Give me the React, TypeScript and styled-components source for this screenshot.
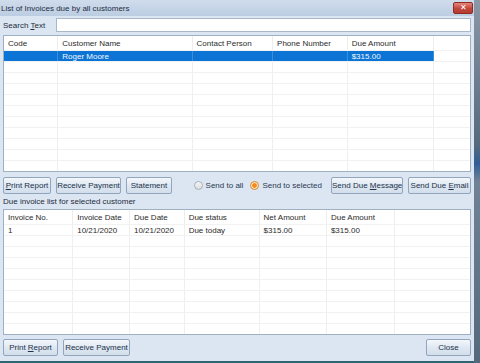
import React from "react";
import styled, { createGlobalStyle } from "styled-components";

const GlobalStyle = createGlobalStyle`
  html, body {
    margin: 0;
    padding: 0;
    background: #5f7286;
  }
  body {
    font-family: "Liberation Sans", Arial, sans-serif;
    font-size: 8px;
    color: #1c2a3a;
  }
`;

type Col = { title: string; width: number };

const customerCols: Col[] = [
  { title: "Code", width: 54 },
  { title: "Customer Name", width: 135 },
  { title: "Contact Person", width: 80 },
  { title: "Phone Number", width: 74 },
  { title: "Due Amount", width: 86 },
  { title: "", width: 37 },
];

const invoiceCols: Col[] = [
  { title: "Invoice No.", width: 69 },
  { title: "Invoice Date", width: 56 },
  { title: "Due Date", width: 54 },
  { title: "Due status", width: 75 },
  { title: "Net Amount", width: 67 },
  { title: "Due Amount", width: 68 },
  { title: "", width: 77 },
];

const customers = [["", "Roger Moore", "", "", "$315.00"]];
const invoices = [["1", "10/21/2020", "10/21/2020", "Due today", "$315.00", "$315.00"]];

const Page = styled.div`
  display: flex;
  width: 480px;
  height: 363px;
`;

const Window = styled.div`
  width: 474px;
  height: 361px;
  background: #dce6f2;
  border-bottom: 2px solid #2f6570;
  display: flex;
  flex-direction: column;
`;

const Backdrop = styled.div`
  flex: 1;
  background: linear-gradient(#8a97a6 0%, #55697d 40%, #2f5d96 45%, #6f8296 50%, #55697d 100%);
`;

const TitleBar = styled.div`
  height: 16px;
  display: flex;
  align-items: center;
  padding-left: 1px;
  background: linear-gradient(#cfdcec, #bccde2);
  color: #1e2c3e;
`;

const CloseButton = styled.div`
  margin-left: auto;
  margin-right: 1px;
  width: 18px;
  height: 10px;
  border: 1px solid #8e2b22;
  border-radius: 2px;
  background: linear-gradient(#e7857c, #c0463b 55%, #b63a2f);
  color: #fff;
  font-size: 8px;
  line-height: 10px;
  text-align: center;
`;

const Body = styled.div`
  flex: 1;
  display: flex;
  flex-direction: column;
  padding: 2px 3px 0 3px;
`;

const SearchRow = styled.div`
  display: flex;
  align-items: center;
  height: 14px;
`;

const Label = styled.span`
  width: 53px;
`;

const SearchInput = styled.div`
  flex: 1;
  height: 12px;
  background: #fff;
  border: 1px solid #a9b8c9;
`;

const GridBox = styled.div<{ $height: number; $top: number }>`
  margin-top: ${(p) => p.$top}px;
  height: ${(p) => p.$height}px;
  box-sizing: border-box;
  border: 1px solid #9fb0c3;
  background: #fff;
  overflow: hidden;
`;

const Table = styled.table`
  border-collapse: collapse;
  table-layout: fixed;
  font-size: 8px;
  color: #2b2b2b;
`;

const HeadCell = styled.th<{ $w: number }>`
  width: ${(p) => p.$w}px;
  height: 14px;
  padding: 0 0 0 4px;
  font-weight: normal;
  text-align: left;
  white-space: nowrap;
  overflow: hidden;
  border-right: 1px solid #ededed;
  border-bottom: 1px solid #f2f2f2;
  &:last-child {
    border-right: none;
  }
`;

const Cell = styled.td<{ $sel?: boolean; $blank?: boolean }>`
  height: 10px;
  padding: 0 0 0 4px;
  white-space: nowrap;
  overflow: hidden;
  border-right: 1px solid ${(p) => (p.$sel && !p.$blank ? "#3d8ed8" : "#efefef")};
  border-bottom: 1px solid #f1f1f1;
  background: ${(p) => (p.$sel && !p.$blank ? "#0b74d4" : "#fff")};
  color: ${(p) => (p.$sel && !p.$blank ? "#f3f8ff" : "#2b2b2b")};
  &:last-child {
    border-right: none;
  }
`;

const ButtonRow = styled.div<{ $top: number }>`
  display: flex;
  align-items: center;
  gap: 5px;
  margin-top: ${(p) => p.$top}px;
  height: 17px;
`;

const Button = styled.div<{ $w: number; $gap?: number }>`
  width: ${(p) => p.$w}px;
  height: 17px;
  margin-left: ${(p) => p.$gap || 0}px;
  box-sizing: border-box;
  border: 1px solid #91a5bc;
  border-radius: 2px;
  background: linear-gradient(#f4f7fb, #dfe8f2 50%, #d2deeb);
  line-height: 15px;
  text-align: center;
  color: #22324a;
  white-space: nowrap;
`;

const Spacer = styled.div`
  flex: 1;
`;

const Radio = styled.label`
  display: flex;
  align-items: center;
  gap: 3px;
  color: #2a3a50;
  margin-right: 2px;
`;

const RadioDot = styled.span<{ $on?: boolean }>`
  width: 7px;
  height: 7px;
  border-radius: 50%;
  border: 1px solid ${(p) => (p.$on ? "#d9892a" : "#a7b0bb")};
  background: ${(p) =>
    p.$on
      ? "radial-gradient(circle, #f08a1c 0 2px, #fbe3c2 2.5px)"
      : "linear-gradient(#f7f7f7, #dcdcdc)"};
`;

const SubLabel = styled.div`
  margin-top: 3px;
  height: 10px;
  line-height: 10px;
`;

const U = styled.span`
  text-decoration: underline;
`;

function Grid({ cols, rows, height, top, selected, fill }: {
  cols: Col[];
  rows: string[][];
  height: number;
  top: number;
  selected?: number;
  fill: number;
}) {
  const all = [...rows];
  while (all.length < fill) all.push([]);
  return (
    <GridBox $height={height} $top={top}>
      <Table>
        <thead>
          <tr>
            {cols.map((c, i) => (
              <HeadCell key={i} $w={c.width - 4}>{c.title}</HeadCell>
            ))}
          </tr>
        </thead>
        <tbody>
          {all.map((r, ri) => (
            <tr key={ri}>
              {cols.map((c, ci) => (
                <Cell key={ci} $sel={ri === selected} $blank={c.title === ""}>
                  {r[ci] || ""}
                </Cell>
              ))}
            </tr>
          ))}
        </tbody>
      </Table>
    </GridBox>
  );
}

export default function App() {
  return (
    <Page>
      <GlobalStyle />
      <Window>
        <TitleBar>
          List of Invoices due by all customers
          <CloseButton>✕</CloseButton>
        </TitleBar>
        <Body>
          <SearchRow>
            <Label>Search <U>T</U>ext</Label>
            <SearchInput />
          </SearchRow>
          <Grid cols={customerCols} rows={customers} height={137} top={3} selected={0} fill={11} />
          <ButtonRow $top={5}>
            <Button $w={48}><U>P</U>rint Report</Button>
            <Button $w={65}>Receive Payment</Button>
            <Button $w={46}>Statement</Button>
            <Spacer />
            <Radio><RadioDot />Send to all</Radio>
            <Radio><RadioDot $on />Send to selected</Radio>
            <Button $w={72} $gap={2}>Send Due <U>M</U>essage</Button>
            <Button $w={63}>Send Due <U>E</U>mail</Button>
          </ButtonRow>
          <SubLabel>Due invoice list for selected customer</SubLabel>
          <Grid cols={invoiceCols} rows={invoices} height={126} top={2} fill={10} />
          <ButtonRow $top={4}>
            <Button $w={55}>Print <U>R</U>eport</Button>
            <Button $w={67}>Receive Payment</Button>
            <Spacer />
            <Button $w={45}>Close</Button>
          </ButtonRow>
        </Body>
      </Window>
      <Backdrop />
    </Page>
  );
}
